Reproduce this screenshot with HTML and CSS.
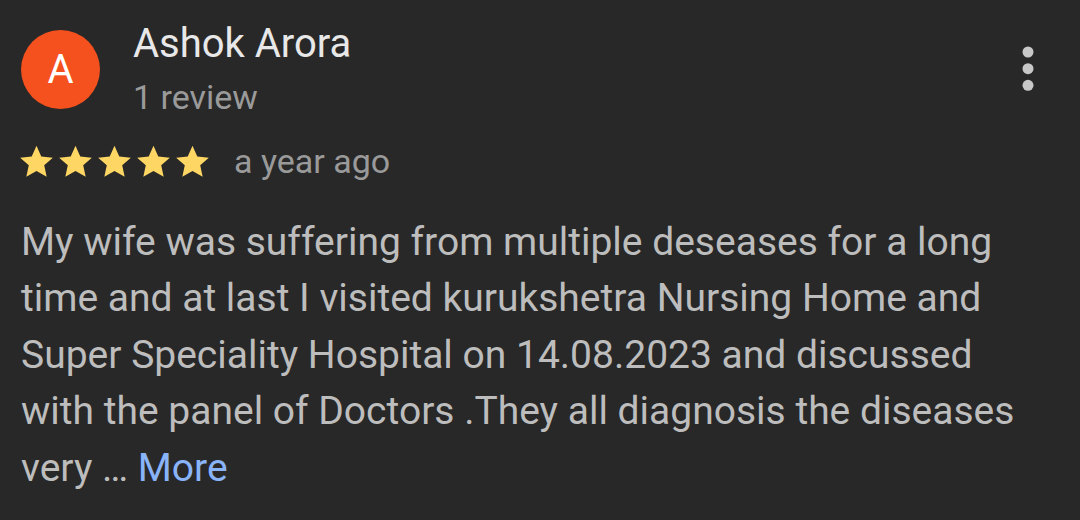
FILE: index.html
```html
<!DOCTYPE html>
<html>
<head>
<meta charset="utf-8">
<link rel="stylesheet" href="styles.css">
</head>
<body>
<div class="review">
  <div class="header">
    <div class="avatar">A</div>
    <div class="who">
      <div class="name">Ashok Arora</div>
      <div class="count">1 review</div>
    </div>
    <div class="menu">
      <svg width="12" height="46" viewBox="0 0 12 46"><circle cx="6" cy="6" r="5.5" fill="#c8c8c8"/><circle cx="6" cy="22.7" r="5.5" fill="#c8c8c8"/><circle cx="6" cy="39.3" r="5.5" fill="#c8c8c8"/></svg>
    </div>
  </div>
  <div class="meta">
    <div class="stars">
      <svg class="star" viewBox="0 0 24 24"><path d="M12 1.8l3.1 6.9 7.5.8-5.6 5 1.6 7.4L12 18.1l-6.6 3.8 1.6-7.4-5.6-5 7.5-.8z"/></svg>
      <svg class="star" viewBox="0 0 24 24"><path d="M12 1.8l3.1 6.9 7.5.8-5.6 5 1.6 7.4L12 18.1l-6.6 3.8 1.6-7.4-5.6-5 7.5-.8z"/></svg>
      <svg class="star" viewBox="0 0 24 24"><path d="M12 1.8l3.1 6.9 7.5.8-5.6 5 1.6 7.4L12 18.1l-6.6 3.8 1.6-7.4-5.6-5 7.5-.8z"/></svg>
      <svg class="star" viewBox="0 0 24 24"><path d="M12 1.8l3.1 6.9 7.5.8-5.6 5 1.6 7.4L12 18.1l-6.6 3.8 1.6-7.4-5.6-5 7.5-.8z"/></svg>
      <svg class="star" viewBox="0 0 24 24"><path d="M12 1.8l3.1 6.9 7.5.8-5.6 5 1.6 7.4L12 18.1l-6.6 3.8 1.6-7.4-5.6-5 7.5-.8z"/></svg>
    </div>
    <span class="when">a year ago</span>
  </div>
  <p class="text">My wife was suffering from multiple deseases for a long time and at last I visited kurukshetra Nursing Home and Super Speciality Hospital on 14.08.2023 and discussed with the panel of Doctors .They all diagnosis the diseases very … <span class="more">More</span></p>
</div>
</body>
</html>
```
FILE: styles.css
```css
html, body {
  margin: 0;
  padding: 0;
  background: #282828;
}
body {
  width: 1080px;
  height: 520px;
  overflow: hidden;
  font-family: Roboto, "Liberation Sans", sans-serif;
}
.review {
  padding: 21px 0 0 21px;
}
.header {
  display: flex;
  align-items: flex-start;
}
.avatar {
  width: 79px;
  height: 79px;
  margin-top: 9px;
  border-radius: 50%;
  background: #f4511e;
  color: #fff;
  font-size: 40px;
  display: flex;
  align-items: center;
  justify-content: center;
  flex-shrink: 0;
}
.who {
  margin-left: 33px;
  flex: 1;
}
.name {
  font-size: 40px;
  color: #e8e8e8;
  line-height: 46px;
}
.count {
  font-size: 34px;
  color: #9a9a9a;
  line-height: 40px;
  margin-top: 9.5px;
}
.menu {
  margin: 24.7px 46px 0 0;
}
.meta {
  display: flex;
  align-items: center;
  margin-top: 23.5px;
  height: 42px;
}
.stars {
  display: flex;
  gap: 2px;
  margin-left: -3px;
}
.star {
  width: 37px;
  height: 37px;
  fill: #fdd663;
}
.when {
  margin-left: 23px;
  font-size: 34px;
  color: #9a9a9a;
}
.text {
  margin: 31.75px 0 0 0;
  width: 1000px;
  font-size: 39px;
  line-height: 56.5px;
  color: #bdbdbd;
}
.more {
  color: #8ab4f8;
}
```
